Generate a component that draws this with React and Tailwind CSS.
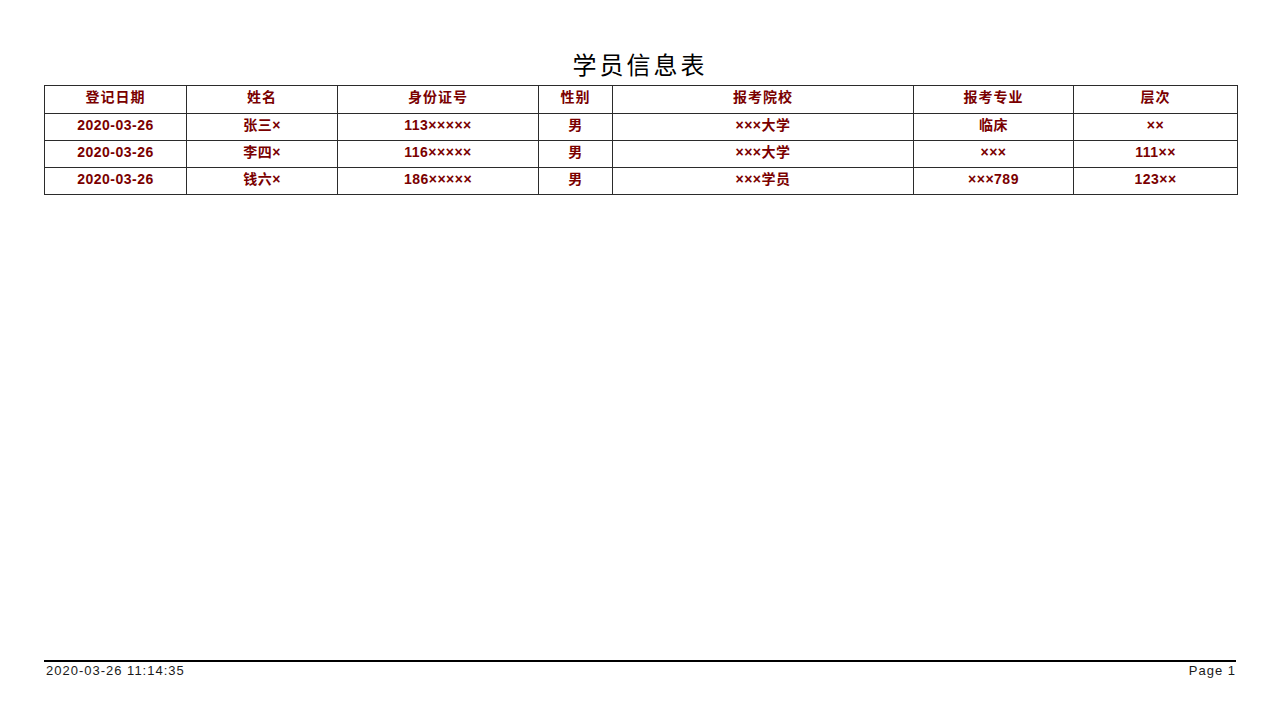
export default function App() {
  const columns = [
    { title: '登记日期', width: 'w-[142px]' },
    { title: '姓名', width: 'w-[151px]' },
    { title: '身份证号', width: 'w-[201px]' },
    { title: '性别', width: 'w-[74px]' },
    { title: '报考院校', width: 'w-[301px]' },
    { title: '报考专业', width: 'w-[160px]' },
    { title: '层次', width: 'w-[164px]' }
  ]

  const rows = [
    ['2020-03-26', '张三×', '113×××××', '男', '×××大学', '临床', '××'],
    ['2020-03-26', '李四×', '116×××××', '男', '×××大学', '×××', '111××'],
    ['2020-03-26', '钱六×', '186×××××', '男', '×××学员', '×××789', '123××']
  ]

  return (
    <div className="w-[1280px] h-[720px] flex flex-col bg-white px-[44px] font-['Liberation_Sans','Noto_Sans_CJK_SC',sans-serif]">
      {/* Title */}
      <h1 className="pt-[49px] h-[85px] text-center text-[24px] leading-[30px] tracking-[3px] text-black font-['Noto_Sans_CJK_SC',sans-serif]">
        学员信息表
      </h1>

      {/* Table */}
      <table className="w-[1193px] border-collapse table-fixed">
        <thead>
          <tr className="h-[28px]">
            {columns.map((col, i) => (
              <th
                key={i}
                className={`${col.width} border border-[#2b2b2b] p-0 pb-[4px] text-[14px] tracking-[1px] font-bold text-[#7a0000] text-center`}
              >
                {col.title}
              </th>
            ))}
          </tr>
        </thead>
        <tbody>
          {rows.map((row, r) => (
            <tr key={r} className="h-[27px]">
              {row.map((cell, c) => (
                <td
                  key={c}
                  className="border border-[#2b2b2b] p-0 pb-[4px] text-[14px] tracking-[0.5px] font-bold text-[#7a0000] text-center"
                >
                  {cell}
                </td>
              ))}
            </tr>
          ))}
        </tbody>
      </table>

      <div className="flex-1" />

      {/* Footer */}
      <div className="border-t-2 border-black flex justify-between pt-[1px] pb-[41px] text-[13px] leading-[16px] tracking-[1px] text-[#1a1a1a]">
        <span className="pl-[2px]">2020-03-26 11:14:35</span>
        <span>Page 1</span>
      </div>
    </div>
  )
}
